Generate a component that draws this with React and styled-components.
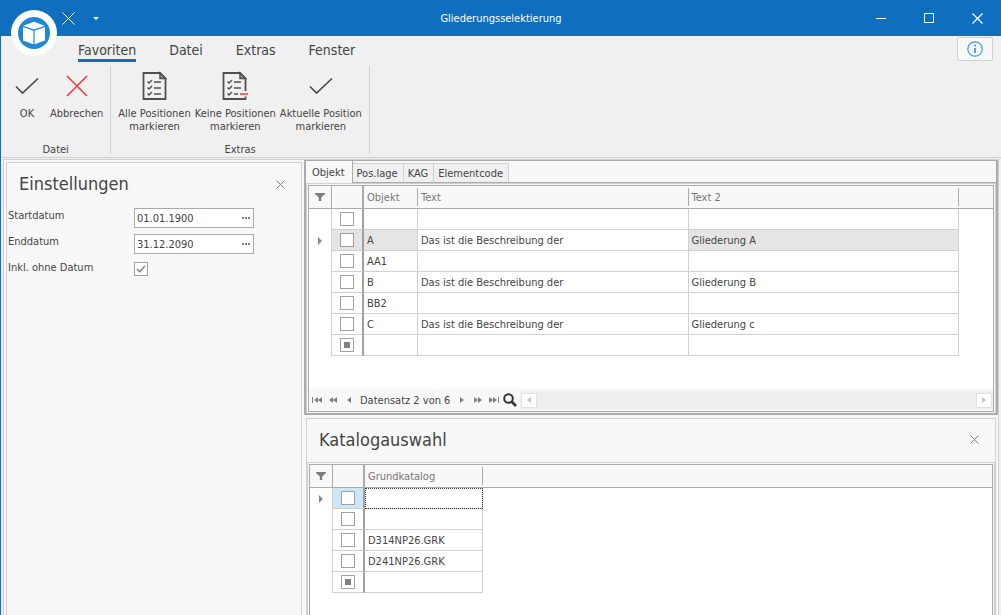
import React from "react";
import styled, { createGlobalStyle, css } from "styled-components";

const objects = [
  { code: "", text: "", text2: "" },
  { code: "A", text: "Das ist die Beschreibung der", text2: "Gliederung A", active: true },
  { code: "AA1", text: "", text2: "" },
  { code: "B", text: "Das ist die Beschreibung der", text2: "Gliederung B" },
  { code: "BB2", text: "", text2: "" },
  { code: "C", text: "Das ist die Beschreibung der", text2: "Gliederung c" },
  { code: "", text: "", text2: "", mixed: true },
];

const catalogs = [
  { name: "", focused: true },
  { name: "" },
  { name: "D314NP26.GRK" },
  { name: "D241NP26.GRK" },
  { name: "", mixed: true },
];

const ribbonTabs = ["Favoriten", "Datei", "Extras", "Fenster"];
const pageTabs = ["Objekt", "Pos.lage", "KAG", "Elementcode"];

const LogoIcon = () => (
  <svg width="46" height="46" viewBox="0 0 46 46">
    <circle cx="23" cy="23" r="23" fill="#fff" />
    <circle cx="23" cy="23" r="16" fill="#1f87d8" />
    <path d="M23 11.800 33.800 15.700 23 19.600 12.200 15.700Z" fill="#fff" />
    <path d="M12 17 22.400 20.800V34.300L12 30.500Z" fill="#fff" />
    <path d="M34 17 23.600 20.800V34.300L34 30.500Z" fill="#fff" />
  </svg>
);

const CrossIcon = ({ size = 10, color = "currentColor", weight = 1 }) => (
  <svg width={size} height={size} viewBox={`0 0 ${size} ${size}`}>
    <path
      d={`M.5.5 ${size - 0.5} ${size - 0.5}M${size - 0.5}.5.5 ${size - 0.5}`}
      stroke={color}
      strokeWidth={weight}
    />
  </svg>
);

const CheckIcon = () => (
  <svg width="24" height="32" viewBox="0 0 24 32" fill="none">
    <path d="M1 16.500 7.500 23 23 8.500" stroke="#4d4d4d" strokeWidth="1.7" />
  </svg>
);

const CancelIcon = () => (
  <svg width="24" height="32" viewBox="0 0 24 32" fill="none">
    <path d="M2 6 22 26M22 6 2 26" stroke="#f03c3c" strokeWidth="1.6" />
  </svg>
);

const ListIcon = ({ minus }) => (
  <svg width="26" height="32" viewBox="0 0 26 32" fill="none" stroke="#505050">
    <path
      d={minus ? "M23.500 21V8.500L18 3H1.500V29H23.500V26.500" : "M1.500 3H18L23.500 8.500V29H1.500Z"}
      strokeWidth="1.8"
    />
    <path d="M18 3V8.500H23.500Z" fill="#9a9a9a" strokeWidth="1.5" />
    <path
      d="M5.500 11.500 7 13 10 10M5.500 17.500 7 19 10 16M5.500 23.500 7 25 10 22"
      strokeWidth="1.5"
    />
    <path
      d={minus ? "M12 12H19M12 18H19M12 24H16" : "M12 12H19M12 18H19M12 24H19"}
      strokeWidth="1.5"
    />
    {minus && <path d="M18 24H26" stroke="#f03c3c" strokeWidth="1.5" />}
  </svg>
);

const InfoIcon = () => (
  <svg width="16" height="16" viewBox="0 0 16 16" fill="none" stroke="#3a9bdc">
    <circle cx="8" cy="8" r="7.200" strokeWidth="1.2" />
    <path d="M8 3.700V5.500M8 7V12" strokeWidth="1.8" />
  </svg>
);

const FunnelIcon = () => (
  <svg width="10" height="8" viewBox="0 0 10 8">
    <path d="M0 0H10V1L6.200 4.500V8H3.800V4.500L0 1Z" fill="#7d7d7d" />
  </svg>
);

const ArrowIcon = () => (
  <svg width="4" height="8" viewBox="0 0 4 8">
    <path d="M0 0 4 4 0 8Z" fill="#8a8a8a" />
  </svg>
);

const NavIcon = ({ count = 1, bar, back }) => {
  const width = count * 4 + (bar ? 2 : 0);
  return (
    <svg width={width} height="6" viewBox={`0 0 ${width} 6`} fill="#808080">
      <g transform={back ? `translate(${width} 0) scale(-1 1)` : undefined}>
        {Array.from({ length: count }, (_, i) => (
          <path key={i} d={`M${i * 4} 0 ${i * 4 + 4} 3 ${i * 4} 6Z`} />
        ))}
        {bar && <path d={`M${width - 1} 0h1v6h-1z`} />}
      </g>
    </svg>
  );
};

const SearchIcon = () => (
  <svg width="14" height="14" viewBox="0 0 14 14" fill="none" stroke="#333">
    <circle cx="5.500" cy="5.500" r="4.300" strokeWidth="2" />
    <path d="M8.500 8.500 13 13" strokeWidth="2.600" />
  </svg>
);

const RowCheck = ({ mixed, label }) => (
  <CheckBox
    type="checkbox"
    aria-label={label}
    ref={(el) => {
      if (el) el.indeterminate = !!mixed;
    }}
  />
);

const TitleBar = () => (
  <Title>
    <QuickAccess>
      <TitleButton aria-label="Abbrechen">
        <CrossIcon size={13} />
      </TitleButton>
      <TitleButton aria-label="Anpassen">
        <svg width="6" height="3" viewBox="0 0 6 3">
          <path d="M0 0H6L3 3Z" fill="#fff" />
        </svg>
      </TitleButton>
    </QuickAccess>
    <Caption>Gliederungsselektierung</Caption>
    <WindowButtons>
      <TitleButton $wide aria-label="Minimieren">
        <svg width="10" height="11" viewBox="0 0 10 11">
          <path d="M0 5.500H10" stroke="#fff" />
        </svg>
      </TitleButton>
      <TitleButton $wide aria-label="Maximieren">
        <svg width="10" height="10" viewBox="0 0 10 10">
          <path d="M.5.5h9v9h-9z" stroke="#fff" fill="none" />
        </svg>
      </TitleButton>
      <TitleButton $wide aria-label="Fenster schließen">
        <CrossIcon size={11} weight={1.2} />
      </TitleButton>
    </WindowButtons>
  </Title>
);

const Ribbon = () => (
  <RibbonBar>
    <RibbonTabs>
      {ribbonTabs.map((tab, index) => (
        <RibbonTab key={tab} $active={index === 0}>
          {tab}
        </RibbonTab>
      ))}
      <InfoButton aria-label="Info">
        <InfoIcon />
      </InfoButton>
    </RibbonTabs>
    <RibbonGroups>
      <RibbonGroup>
        <RibbonItems>
          <RibbonButton>
            <CheckIcon />
            OK
          </RibbonButton>
          <RibbonButton>
            <CancelIcon />
            Abbrechen
          </RibbonButton>
        </RibbonItems>
        <GroupName>Datei</GroupName>
      </RibbonGroup>
      <RibbonGroup>
        <RibbonItems>
          <RibbonButton>
            <ListIcon />
            Alle Positionen
            <br />
            markieren
          </RibbonButton>
          <RibbonButton>
            <ListIcon minus />
            Keine Positionen
            <br />
            markieren
          </RibbonButton>
          <RibbonButton>
            <CheckIcon />
            Aktuelle Position
            <br />
            markieren
          </RibbonButton>
        </RibbonItems>
        <GroupName>Extras</GroupName>
      </RibbonGroup>
    </RibbonGroups>
  </RibbonBar>
);

const Settings = () => (
  <SettingsPanel>
    <PanelHeader>
      <PanelTitle>Einstellungen</PanelTitle>
      <CloseButton aria-label="Einstellungen schließen">
        <CrossIcon size={9} />
      </CloseButton>
    </PanelHeader>
    <Field>
      <label htmlFor="start">Startdatum</label>
      <DateBox>
        <DateInput id="start" defaultValue="01.01.1900" />
        <MoreButton aria-label="Startdatum wählen">
          <Dots />
        </MoreButton>
      </DateBox>
    </Field>
    <Field>
      <label htmlFor="end">Enddatum</label>
      <DateBox>
        <DateInput id="end" defaultValue="31.12.2090" />
        <MoreButton aria-label="Enddatum wählen">
          <Dots />
        </MoreButton>
      </DateBox>
    </Field>
    <Field>
      <label htmlFor="undated">Inkl. ohne Datum</label>
      <CheckHolder>
        <CheckBox id="undated" type="checkbox" defaultChecked />
        <svg width="10" height="8" viewBox="0 0 10 8" fill="none">
          <path d="M1 4 3.700 6.700 9 1" stroke="#808080" strokeWidth="1.500" />
        </svg>
      </CheckHolder>
    </Field>
  </SettingsPanel>
);

const Dots = () => (
  <svg width="8" height="2" viewBox="0 0 8 2" fill="#808080">
    <path d="M0 0h2v2H0zM3 0h2v2H3zM6 0h2v2H6z" />
  </svg>
);

const ObjectGrid = () => (
  <GridTable>
    <colgroup>
      <Col $w={23} />
      <Col $w={32} />
      <Col $w={54} />
      <col />
      <col />
      <Col $w={34} />
    </colgroup>
    <thead>
      <tr>
        <HeadCell $line>
          <FunnelIcon />
        </HeadCell>
        <HeadCell $thick />
        <HeadCell>
          <HeadText>Objekt</HeadText>
        </HeadCell>
        <HeadCell>
          <HeadText>Text</HeadText>
        </HeadCell>
        <HeadCell>
          <HeadText>Text 2</HeadText>
        </HeadCell>
        <HeadCell />
      </tr>
    </thead>
    <tbody>
      {objects.map((row, index) => (
        <tr key={index}>
          <Indicator>{row.active && <ArrowIcon />}</Indicator>
          <SelectCell $bg={row.active && "#e5e5e5"}>
            <RowCheck mixed={row.mixed} label={`Zeile ${index + 1}`} />
          </SelectCell>
          <Cell $bg={row.active && "#e5e5e5"}>{row.code}</Cell>
          <Cell>{row.text}</Cell>
          <Cell $bg={row.active && "#e5e5e5"}>{row.text2}</Cell>
          <td />
        </tr>
      ))}
    </tbody>
  </GridTable>
);

const Navigator = () => (
  <NavBar>
    <NavButton aria-label="Erster">
      <NavIcon count={2} bar back />
    </NavButton>
    <NavButton aria-label="Seite zurück">
      <NavIcon count={2} back />
    </NavButton>
    <NavButton aria-label="Zurück">
      <NavIcon back />
    </NavButton>
    <NavText>Datensatz 2 von 6</NavText>
    <NavButton aria-label="Weiter">
      <NavIcon />
    </NavButton>
    <NavButton aria-label="Seite weiter">
      <NavIcon count={2} />
    </NavButton>
    <NavButton aria-label="Letzter">
      <NavIcon count={2} bar />
    </NavButton>
    <NavButton aria-label="Suchen">
      <SearchIcon />
    </NavButton>
    <ScrollBar>
      <ScrollButton aria-label="Nach links">
        <svg width="4" height="6" viewBox="0 0 4 6">
          <path d="M4 0 0 3 4 6Z" fill="#c4c4c4" />
        </svg>
      </ScrollButton>
      <ScrollButton aria-label="Nach rechts">
        <svg width="4" height="6" viewBox="0 0 4 6">
          <path d="M0 0 4 3 0 6Z" fill="#c4c4c4" />
        </svg>
      </ScrollButton>
    </ScrollBar>
  </NavBar>
);

const ObjectPanel = () => (
  <DocumentGroup>
    <PageTabs>
      {pageTabs.map((tab, index) => (
        <PageTab key={tab} $active={index === 0}>
          {tab}
        </PageTab>
      ))}
      <TabRest />
    </PageTabs>
    <PageBody>
      <GridFrame>
        <ObjectGrid />
        <Spacer />
        <Navigator />
      </GridFrame>
    </PageBody>
  </DocumentGroup>
);

const CatalogPanel = () => (
  <CatalogBox>
    <CatalogHeader>
      <PanelTitle>Katalogauswahl</PanelTitle>
      <CloseButton aria-label="Katalogauswahl schließen">
        <CrossIcon size={9} />
      </CloseButton>
    </CatalogHeader>
    <CatalogBody>
      <GridTable>
        <colgroup>
          <Col $w={23} />
          <Col $w={32} />
          <Col $w={118} />
          <col />
        </colgroup>
        <thead>
          <tr>
            <HeadCell $line>
              <FunnelIcon />
            </HeadCell>
            <HeadCell $thick />
            <HeadCell>
              <HeadText>Grundkatalog</HeadText>
            </HeadCell>
            <HeadCell />
          </tr>
        </thead>
        <tbody>
          {catalogs.map((row, index) => (
            <tr key={index}>
              <Indicator>{row.focused && <ArrowIcon />}</Indicator>
              <SelectCell $bg={row.focused && "#cde6f7"}>
                <RowCheck mixed={row.mixed} label={`Katalog ${index + 1}`} />
              </SelectCell>
              <Cell $focused={row.focused}>{row.name}</Cell>
              <td />
            </tr>
          ))}
        </tbody>
      </GridTable>
    </CatalogBody>
  </CatalogBox>
);

const App = () => (
  <>
    <GlobalStyle />
    <Window>
      <TitleBar />
      <Logo>
        <LogoIcon />
      </Logo>
      <Ribbon />
      <Workspace>
        <Settings />
        <Documents>
          <ObjectPanel />
          <CatalogPanel />
        </Documents>
      </Workspace>
    </Window>
  </>
);

export default App;

const GlobalStyle = createGlobalStyle`
  * {
    box-sizing: border-box;
  }

  body {
    margin: 0;
    overflow: hidden;
  }

  body, button, input {
    font-family: "DejaVu Sans Condensed", Tahoma, "DejaVu Sans", sans-serif;
    font-size: 11px;
    line-height: 13px;
    color: #444;
  }

  button {
    display: flex;
    align-items: center;
    justify-content: center;
    padding: 0;
    border: 0;
    background: none;
  }

  svg {
    display: block;
    flex: none;
  }
`;

const Window = styled.div`
  position: relative;
  display: flex;
  flex-direction: column;
  height: 100vh;
  border-left: 1px solid #106ebe;
  background: #f0f0f0;
`;

const Title = styled.header`
  display: grid;
  grid-template-columns: 1fr auto 1fr;
  align-items: center;
  height: 36px;
  flex: none;
  background: #106ebe;
  color: #fff;
`;

const QuickAccess = styled.div`
  display: flex;
  gap: 18px;
  padding-left: 61px;
`;

const Caption = styled.div`
  text-align: center;
`;

const WindowButtons = styled.div`
  display: flex;
  justify-content: flex-end;
`;

const TitleButton = styled.button`
  width: ${(props) => (props.$wide ? "48px" : "auto")};
  height: 36px;
  color: #fff;
`;

const Logo = styled.div`
  position: absolute;
  top: 10px;
  left: 10px;
`;

const RibbonBar = styled.section`
  height: 122px;
  flex: none;
  border-bottom: 1px solid #d0d0d0;
`;

const RibbonTabs = styled.nav`
  display: flex;
  align-items: flex-start;
  gap: 33px;
  height: 30px;
  padding: 1px 8px 0 77px;
`;

const RibbonTab = styled.button`
  height: 25px;
  padding-top: 3px;
  font-size: 14px;
  line-height: 18px;
  border-bottom: 3px solid ${(props) => (props.$active ? "#106ebe" : "transparent")};
`;

const InfoButton = styled.button`
  width: 36px;
  height: 24px;
  margin-left: auto;
  border: 1px solid #d0d0d0;
  border-radius: 2px;
  background: #f8f8f8;
`;

const RibbonGroups = styled.div`
  display: flex;
`;

const RibbonGroup = styled.div`
  display: flex;
  flex-direction: column;
  justify-content: space-between;
  height: 88px;
  padding: 0 5px;
  border-right: 1px solid #d0d0d0;
`;

const RibbonItems = styled.div`
  display: flex;
`;

const RibbonButton = styled.button`
  display: block;
  min-width: 42px;
  padding: 4px 2px 0;
  text-align: center;
  white-space: nowrap;

  svg {
    margin: 0 auto 5px;
  }
`;

const GroupName = styled.div`
  line-height: 9px;
  text-align: center;
`;

const Workspace = styled.main`
  display: flex;
  flex: 1;
  min-height: 0;
  gap: 2px;
  margin: 1px 2px 0;
  border: 1px solid #d0d0d0;
  border-bottom: 0;
  background: #f8f8f8;
`;

const SettingsPanel = styled.aside`
  width: 296px;
  flex: none;
  margin: 2px 0 0 2px;
  border: 1px solid #d0d0d0;
  border-bottom: 0;
`;

const PanelHeader = styled.div`
  display: flex;
  align-items: center;
  justify-content: space-between;
  height: 42px;
  padding: 0 16px 0 12px;
`;

const PanelTitle = styled.h2`
  margin: 0;
  font-size: 18px;
  line-height: 24px;
  font-weight: normal;
`;

const CloseButton = styled.button`
  color: #808080;
`;

const Field = styled.div`
  display: flex;
  height: 26px;
  padding: 3px 1px;

  label {
    width: 126px;
    padding-top: 1px;
  }
`;

const DateBox = styled.div`
  display: flex;
  width: 120px;
  height: 20px;
  border: 1px solid #ababab;
  background: #fff;
`;

const DateInput = styled.input`
  flex: 1;
  min-width: 0;
  padding: 0 2px;
  border: 0;
  outline: 0;
  background: none;
`;

const MoreButton = styled.button`
  width: 14px;
`;

const CheckBox = styled.input`
  appearance: none;
  display: block;
  width: 14px;
  height: 14px;
  margin: 0 auto;
  border: 1px solid #a0a0a0;
  background: #fff;

  &:indeterminate {
    background: #808080;
    box-shadow: inset 0 0 0 3px #fff;
  }
`;

const CheckHolder = styled.div`
  display: grid;
  width: 14px;
  height: 14px;
  margin-top: 2px;

  > * {
    grid-area: 1 / 1;
    place-self: center;
  }

  svg {
    pointer-events: none;
  }
`;

const Documents = styled.div`
  display: flex;
  flex-direction: column;
  flex: 1;
  min-width: 0;
  gap: 3px;
`;

const DocumentGroup = styled.section`
  display: flex;
  flex-direction: column;
  height: 255px;
  flex: none;
  border: 2px solid #ababab;
  border-top-width: 1px;
`;

const PageTabs = styled.div`
  display: flex;
  align-items: flex-end;
  height: 22px;
`;

const PageTab = styled.button`
  height: 20px;
  padding: 0 5px 0 4px;
  border: 1px solid #d0d0d0;
  border-width: 1px 1px 1px 0;
  border-bottom-color: #ababab;
  background: #f0f0f0;

  ${(props) =>
    props.$active &&
    css`
      height: 22px;
      padding: 0 7px 0 6px;
      border-width: 0 1px 0 0;
      border-color: #ababab;
      background: #f8f8f8;
    `}
`;

const TabRest = styled.div`
  flex: 1;
  border-bottom: 1px solid #ababab;
`;

const PageBody = styled.div`
  display: flex;
  flex: 1;
  padding: 1px;
  border: 1px solid #d0d0d0;
  border-bottom: 0;
`;

const GridFrame = styled.div`
  display: flex;
  flex-direction: column;
  flex: 1;
  min-width: 0;
  border: 1px solid #ababab;
  background: #fff;
`;

const GridTable = styled.table`
  width: 100%;
  table-layout: fixed;
  border-spacing: 0;

  td, th {
    padding: 0;
  }
`;

const Col = styled.col`
  width: ${(props) => props.$w}px;
`;

const HeadCell = styled.th`
  height: 23px;
  border-bottom: 1px solid #ababab;
  background: #f8f8f8;
  color: #777;
  font-weight: normal;
  text-align: left;

  ${(props) => props.$line && "border-right: 1px solid #ababab;"}
  ${(props) => props.$thick && "border-right: 2px solid #ababab;"}

  svg {
    margin: 0 auto;
  }
`;

const HeadText = styled.div`
  height: 18px;
  padding-left: 3px;
  border-right: 1px solid #ababab;
  line-height: 19px;
`;

const Cell = styled.td`
  height: 21px;
  border-right: 1px solid #d0d0d0;
  border-bottom: 1px solid #d0d0d0;
  background: ${(props) => props.$bg || "#fff"};

  && {
    padding-left: 3px;
  }

  ${(props) => props.$focused && "outline: 1px dotted #333; outline-offset: -1px;"}
`;

const SelectCell = styled(Cell)`
  border-right: 2px solid #a0a0a0;

  && {
    padding: 0;
  }
`;

const Indicator = styled.td`
  border-right: 1px solid #d0d0d0;

  svg {
    margin: 0 auto;
  }
`;

const Spacer = styled.div`
  flex: 1;
`;

const NavBar = styled.div`
  display: flex;
  align-items: center;
  height: 22px;
  background: #f8f8f8;
`;

const NavButton = styled.button`
  width: 16px;
  height: 20px;
`;

const NavText = styled.span`
  padding: 0 4px 0 3px;
`;

const ScrollBar = styled.div`
  display: flex;
  align-items: center;
  justify-content: space-between;
  flex: 1;
  height: 18px;
  margin-left: 2px;
  padding: 0 1px;
  background: #efefef;
`;

const ScrollButton = styled.button`
  width: 16px;
  height: 15px;
  border: 1px solid #e2e2e2;
  background: #fff;
`;

const CatalogBox = styled.section`
  display: flex;
  flex-direction: column;
  flex: 1;
  min-height: 0;
  margin: 0 2px;
  border: 1px solid #d0d0d0;
  border-bottom: 0;
`;

const CatalogHeader = styled(PanelHeader)`
  height: 45px;
  flex: none;
  padding-bottom: 4px;
`;

const CatalogBody = styled.div`
  flex: 1;
  margin: 0 2px;
  border: 1px solid #ababab;
  border-bottom: 0;
  background: #fff;
  box-shadow: 0 0 0 1px #f8f8f8, 0 0 0 2px #d0d0d0;
`;
